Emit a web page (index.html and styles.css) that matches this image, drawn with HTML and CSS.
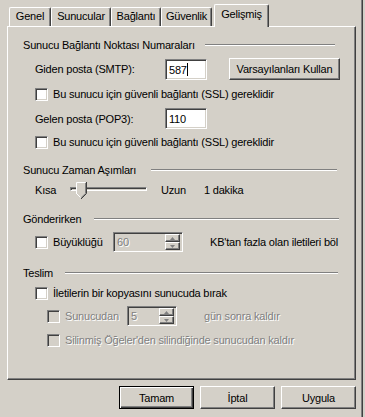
FILE: index.html
```html
<!DOCTYPE html>
<html lang="tr">
<head>
<meta charset="utf-8">
<title>Gelişmiş</title>
<link rel="stylesheet" href="styles.css">
</head>
<body>
<div class="dialog">
  <div class="tabs">
    <div class="tab t1">Genel</div>
    <div class="tab t2">Sunucular</div>
    <div class="tab t3">Bağlantı</div>
    <div class="tab t4">Güvenlik</div>
    <div class="tab active">Gelişmiş</div>
  </div>
  <div class="panel">
    <div class="group g1"><span>Sunucu Bağlantı Noktası Numaraları</span><i class="etch e1"></i></div>
    <div class="row r-smtp">
      <span class="label">Giden posta (SMTP):</span>
      <span class="field f-port">587<b class="caret"></b></span>
      <button class="btn defaults">Varsayılanları Kullan</button>
    </div>
    <div class="row check r-ssl1"><span class="cb"></span><span>Bu sunucu için güvenli bağlantı (SSL) gereklidir</span></div>
    <div class="row r-pop">
      <span class="label">Gelen posta (POP3):</span>
      <span class="field f-port">110</span>
    </div>
    <div class="row check r-ssl2"><span class="cb"></span><span>Bu sunucu için güvenli bağlantı (SSL) gereklidir</span></div>

    <div class="group g2"><span>Sunucu Zaman Aşımları</span><i class="etch e2"></i></div>
    <div class="row r-slider">
      <span class="kisa">Kısa</span>
      <span class="track"><span class="thumb"><svg width="11" height="17" viewBox="0 0 11 17"><path d="M0.5 0.5 H9.5 V11.5 L5 16 L0.5 11.5 Z" fill="#d4d0c8"/><path d="M0.5 12 V0.5 H9.5" stroke="#fff" fill="none"/><path d="M10.5 0 V11.5 L5 17" stroke="#404040" fill="none"/><path d="M9.5 1 V11.3 L5 15.8" stroke="#808080" fill="none"/><path d="M0.5 11.5 L4.5 15.5" stroke="#fff" fill="none"/></svg></span></span>
      <span class="uzun">Uzun</span>
      <span>1 dakika</span>
    </div>

    <div class="group g3"><span>Gönderirken</span><i class="etch e3"></i></div>
    <div class="row r-size">
      <span class="cb"></span><span class="cbtext">Büyüklüğü</span>
      <span class="spin s-size"><span class="val">60</span><span class="arrows"><span class="ab up"><svg width="5" height="3" viewBox="0 0 5 3"><path d="M2.5 0 L5 3 H0 Z" fill="#808080"/></svg></span><span class="ab dn"><svg width="5" height="3" viewBox="0 0 5 3"><path d="M0 0 H5 L2.5 3 Z" fill="#808080"/></svg></span></span></span>
      <span class="after-size">KB'tan fazla olan iletileri böl</span>
    </div>

    <div class="group g4"><span>Teslim</span><i class="etch e4"></i></div>
    <div class="row check r-copy"><span class="cb"></span><span>İletilerin bir kopyasını sunucuda bırak</span></div>
    <div class="row r-days sub">
      <span class="cb dis"></span><span class="cbtext distext">Sunucudan</span>
      <span class="spin s-days"><span class="val">5</span><span class="arrows"><span class="ab up"><svg width="5" height="3" viewBox="0 0 5 3"><path d="M2.5 0 L5 3 H0 Z" fill="#808080"/></svg></span><span class="ab dn"><svg width="5" height="3" viewBox="0 0 5 3"><path d="M0 0 H5 L2.5 3 Z" fill="#808080"/></svg></span></span></span>
      <span class="distext after-days">gün sonra kaldır</span>
    </div>
    <div class="row check sub r-del"><span class="cb dis"></span><span class="distext">Silinmiş Öğeler'den silindiğinde sunucudan kaldır</span></div>
  </div>
  <div class="buttons">
    <button class="btn dlg default">Tamam</button>
    <button class="btn dlg">İptal</button>
    <button class="btn dlg">Uygula</button>
  </div>
</div>
</body>
</html>
```

FILE: styles.css
```css
html, body {
  margin: 0;
  padding: 0;
  background: #d4d0c8;
}
body {
  font-family: "Liberation Sans", Arial, sans-serif;
  font-size: 11px;
  letter-spacing: -0.2px;
  color: #000;
  width: 365px;
  height: 417px;
  overflow: hidden;
}
.dialog {
  width: 363px;
  height: 417px;
  box-sizing: border-box;
  border-right: 1px solid #404040;
  box-shadow: inset -1px 0 0 #808080;
}
.tabs {
  display: flex;
  align-items: flex-end;
  height: 26px;
  padding-left: 9px;
  position: relative;
  z-index: 2;
}
.tab {
  box-sizing: border-box;
  height: 19px;
  border-top: 1px solid #fff;
  border-left: 1px solid #fff;
  border-right: 1px solid #404040;
  box-shadow: inset -1px 0 0 #808080;
  border-radius: 2px 2px 0 0;
  text-align: center;
  line-height: 17px;
  background: #d4d0c8;
}
.t1 { width: 42px; }
.t2 { width: 60px; }
.t3 { width: 50px; }
.t4 { width: 51px; }
.tab.active {
  width: 55px;
  height: 23px;
  margin-left: 2px;
  margin-bottom: -1px;
  line-height: 19px;
}
.panel {
  box-sizing: border-box;
  margin-left: 7px;
  width: 349px;
  height: 354px;
  border-top: 1px solid #fff;
  border-left: 1px solid #fff;
  border-right: 1px solid #404040;
  border-bottom: 1px solid #404040;
  box-shadow: inset -1px -1px 0 #808080;
  padding-left: 15px;
  position: relative;
  z-index: 1;
}
.group {
  display: flex;
  align-items: center;
  height: 14px;
}
.etch {
  display: block;
  height: 0;
  border-top: 1px solid #808080;
  border-bottom: 1px solid #fff;
  margin-left: auto;
}
.g1 { margin-top: 11px; }
.e1 { width: 130px; margin-right: 20px; }
.g2 { margin-top: 14px; }
.e2 { width: 186px; margin-right: 18px; }
.g3 { margin-top: 12px; }
.e3 { width: 245px; margin-right: 16px; }
.g4 { margin-top: 14px; }
.e4 { width: 273px; margin-right: 17px; }

.row {
  display: flex;
  align-items: center;
  padding-left: 12px;
}
.row.check { height: 14px; }
.row.sub { padding-left: 24px; }
.label { width: 130px; }

.r-smtp { height: 22px; margin-top: 6px; }
.r-ssl1 { margin-top: 7px; }
.r-pop { height: 21px; margin-top: 7px; }
.r-ssl2 { margin-top: 6px; }
.r-slider { height: 20px; margin-top: 3px; }
.r-size { height: 20px; margin-top: 6px; }
.r-copy { margin-top: 6px; }
.r-days { height: 20px; margin-top: 6px; }
.r-del { margin-top: 7px; }

.field {
  box-sizing: border-box;
  display: flex;
  align-items: center;
  width: 42px;
  height: 21px;
  background: #fff;
  border-top: 1px solid #808080;
  border-left: 1px solid #808080;
  border-right: 1px solid #fff;
  border-bottom: 1px solid #fff;
  box-shadow: inset 1px 1px 0 #404040, inset -1px -1px 0 #d4d0c8;
  padding-left: 3px;
}
.caret {
  display: inline-block;
  width: 1px;
  height: 13px;
  background: #000;
}
.r-smtp .field { margin-top: 1px; }

.btn {
  box-sizing: border-box;
  font: inherit;
  letter-spacing: inherit;
  color: #000;
  background: #d4d0c8;
  border-top: 1px solid #fff;
  border-left: 1px solid #fff;
  border-right: 1px solid #404040;
  border-bottom: 1px solid #404040;
  box-shadow: inset -1px -1px 0 #808080;
  padding: 0;
  margin: 0;
  height: 22px;
}
.defaults {
  width: 111px;
  margin-left: 22px;
  margin-bottom: 1px;
}

.cb {
  box-sizing: border-box;
  flex: none;
  width: 13px;
  height: 13px;
  background: #fff;
  border-top: 1px solid #808080;
  border-left: 1px solid #808080;
  border-right: 1px solid #fff;
  border-bottom: 1px solid #fff;
  box-shadow: inset 1px 1px 0 #404040, inset -1px -1px 0 #d4d0c8;
  margin-right: 5px;
}
.cb.dis { background: #d4d0c8; }
.distext {
  color: #808080;
  text-shadow: 1px 1px 0 #fff;
}

.kisa { width: 35px; }
.track {
  position: relative;
  box-sizing: border-box;
  width: 77px;
  height: 4px;
  border-top: 1px solid #808080;
  border-left: 1px solid #808080;
  border-right: 1px solid #fff;
  border-bottom: 1px solid #fff;
  box-shadow: inset 1px 1px 0 #404040, inset -1px -1px 0 #d4d0c8;
  margin-top: -3px;
}
.thumb {
  position: absolute;
  left: 5px;
  top: -6px;
  width: 11px;
  height: 17px;
}
.thumb svg { display: block; }
.uzun { margin-left: 14px; width: 43px; }

.cbtext { width: 60px; }
.r-days .cbtext { width: 62px; }
.spin {
  box-sizing: border-box;
  display: flex;
  align-items: center;
  height: 20px;
  background: #d4d0c8;
  border-top: 1px solid #808080;
  border-left: 1px solid #808080;
  border-right: 1px solid #fff;
  border-bottom: 1px solid #fff;
  box-shadow: inset 1px 1px 0 #404040, inset -1px -1px 0 #d4d0c8;
  padding: 2px 2px 2px 3px;
  color: #808080;
}
.s-size { width: 70px; }
.s-days { width: 50px; }
.val { flex: 1; text-shadow: 1px 1px 0 #fff; }
.arrows {
  display: flex;
  flex-direction: column;
  width: 15px;
  height: 16px;
}
.ab {
  box-sizing: border-box;
  flex: 1;
  display: flex;
  align-items: center;
  justify-content: center;
  border-top: 1px solid #fff;
  border-left: 1px solid #fff;
  border-right: 1px solid #404040;
  border-bottom: 1px solid #404040;
  box-shadow: inset -1px -1px 0 #808080;
}
.ab svg { display: block; }
.after-size { margin-left: 27px; }
.after-days { margin-left: 27px; }

.buttons {
  display: flex;
  justify-content: flex-end;
  gap: 6px;
  width: 356px;
  margin-top: 6px;
}
.btn.dlg {
  width: 75px;
  height: 23px;
}
.btn.default {
  border: 1px solid #000;
  box-shadow: inset 1px 1px 0 #fff, inset -1px -1px 0 #404040, inset -2px -2px 0 #808080;
}
```
